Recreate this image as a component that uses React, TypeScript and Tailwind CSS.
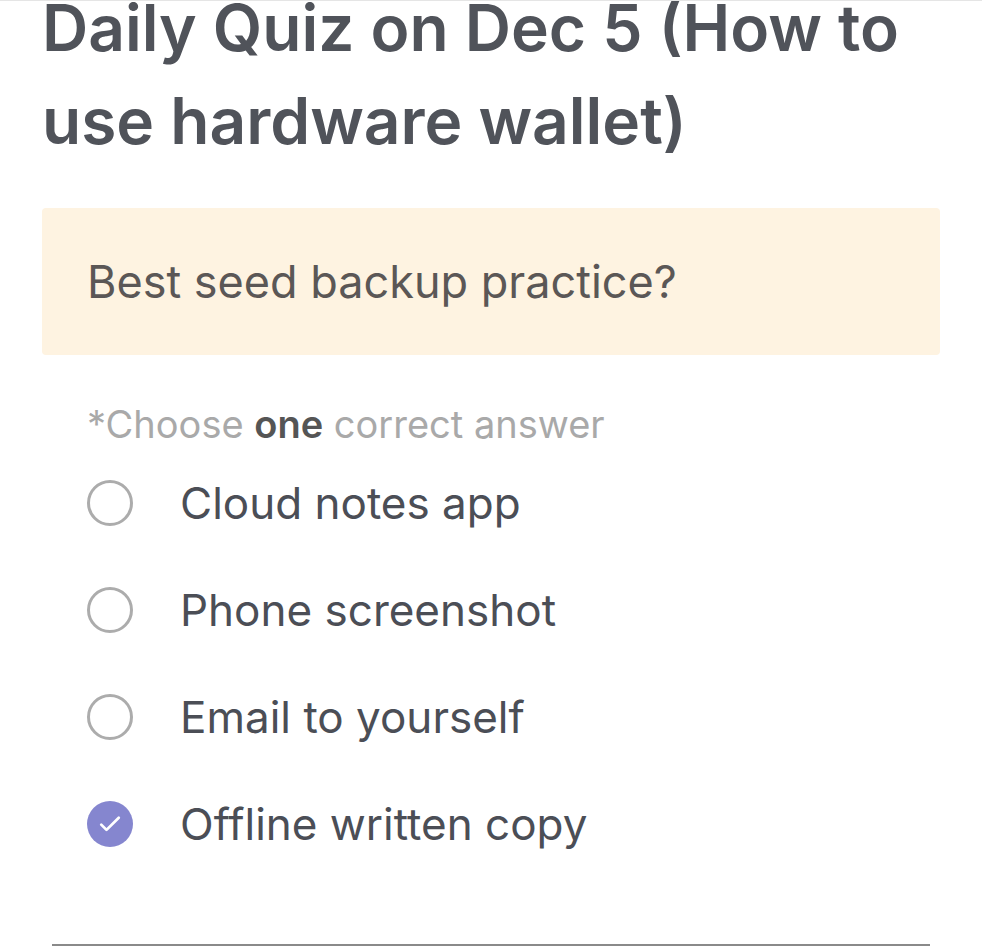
import React, { useState } from "react";

const OPTIONS = ["Cloud notes app", "Phone screenshot", "Email to yourself", "Offline written copy"];

function Radio({ checked }: { checked: boolean }) {
  if (checked) {
    return (
      <div className="flex h-[46px] w-[46px] shrink-0 items-center justify-center rounded-full bg-[#8586cf]">
        <svg width="30" height="30" viewBox="0 0 24 24" fill="none" stroke="white" strokeWidth="2.2" strokeLinecap="round" strokeLinejoin="round">
          <path d="M5 12.5l4.2 4.2L19 7" />
        </svg>
      </div>
    );
  }
  return <div className="h-[46px] w-[46px] shrink-0 rounded-full border-[3px] border-[#acacac]" />;
}

export default function App() {
  const [selected, setSelected] = useState(3);

  return (
    <div className="h-[946px] overflow-hidden bg-white font-['Inter',sans-serif] border-t border-[#e5e5e5]">
      <div className="px-[42px]">
        <h1 className="-mt-[20px] text-[64px] font-semibold leading-[93px] text-[#50535a]">
          Daily Quiz on Dec 5 (How to use hardware wallet)
        </h1>

        <div className="mt-[41px] flex h-[147px] items-center rounded-[4px] bg-[#fef3e1] px-[45px]">
          <p className="text-[45px] font-normal text-[#5b5756]">Best seed backup practice?</p>
        </div>

        <p className="mt-[49px] px-[45px] text-[38px] leading-[40px] text-[#a9a9a9]">
          *Choose <span className="font-semibold text-[#555555]">one</span> correct answer
        </p>

        <div className="mt-[5px] flex flex-col px-[45px]">
          {OPTIONS.map((opt, i) => (
            <button
              key={opt}
              onClick={() => setSelected(i)}
              className={`flex items-center gap-[47px] text-left ${i === 3 ? "h-[108px]" : "h-[107px]"}`}
            >
              <Radio checked={selected === i} />
              <span className="text-[44px] font-normal text-[#4b4e56]">{opt}</span>
            </button>
          ))}
        </div>
      </div>
      <div className="mx-[52px] mt-[66px] border-t-2 border-[#8a8a8a]" />
    </div>
  );
}
